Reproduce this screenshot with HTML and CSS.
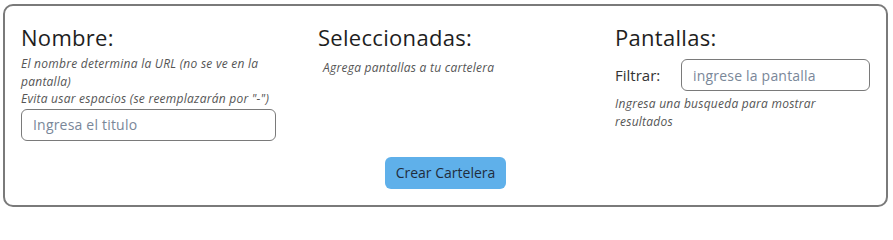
FILE: index.html
```html
<!DOCTYPE html>
<html lang="es">
<head>
<meta charset="utf-8">
<title>Crear Cartelera</title>
<link rel="stylesheet" href="styles.css">
</head>
<body>
<div class="panel">
  <div class="cols">
    <div class="col">
      <h2 class="title">Nombre:</h2>
      <p class="help help-wrap-1">El nombre determina la URL (no se ve en la pantalla)<br>Evita usar espacios (se reemplazarán por "-")</p>
      <input class="field field-name" type="text" placeholder="Ingresa el titulo">
    </div>
    <div class="col">
      <h2 class="title">Seleccionadas:</h2>
      <p class="help help-indent">Agrega pantallas a tu cartelera</p>
    </div>
    <div class="col">
      <h2 class="title">Pantallas:</h2>
      <div class="filter">
        <label class="filter-label">Filtrar:</label>
        <input class="field field-filter" type="text" placeholder="ingrese la pantalla">
      </div>
      <p class="help help-wrap">Ingresa una busqueda para mostrar resultados</p>
    </div>
  </div>
  <div class="actions">
    <button class="btn" type="button">Crear Cartelera</button>
  </div>
</div>
</body>
</html>
```
FILE: styles.css
```css
html, body {
  margin: 0;
  padding: 0;
  background: #ffffff;
}
body {
  font-family: "Open Sans", "Lato", sans-serif;
  color: #222;
}
.panel {
  margin: 4px 5px 5px 3px;
  border: 2px solid #7a7a7a;
  border-radius: 10px;
  height: 203px;
  box-sizing: border-box;
  padding: 18px 16px 0 16px;
}
.cols {
  display: grid;
  grid-template-columns: 297px 297px 1fr;
}
.title {
  margin: 0;
  padding-bottom: 4px;
  font-size: 22px;
  font-weight: 400;
  line-height: 26px;
  letter-spacing: 0.3px;
  color: #1e1e1e;
}
.help {
  margin: 0;
  font-size: 12px;
  font-style: italic;
  line-height: 17.5px;
  letter-spacing: 0.25px;
  color: #555;
}
.help-wrap-1 {
  width: 255px;
  padding-top: 1px;
}
.help-indent {
  padding-left: 5px;
  margin-top: 5px;
}
.help-wrap {
  width: 220px;
  margin-top: 4px;
}
.field {
  font-family: inherit;
  font-size: 14px;
  letter-spacing: 0.2px;
  height: 32px;
  box-sizing: border-box;
  border: 1px solid #7a7a7a;
  border-radius: 6px;
  padding: 0 11px;
  color: #333;
  outline: none;
}
.field::placeholder {
  color: #7a8799;
}
.field-name {
  width: 255px;
  margin-top: 1px;
}
.filter {
  display: flex;
  align-items: center;
  margin-top: 5px;
}
.filter-label {
  font-size: 15px;
  color: #333;
  width: 66px;
}
.field-filter {
  width: 189px;
}
.actions {
  display: flex;
  justify-content: center;
  margin-top: 16px;
}
.btn {
  font-family: inherit;
  font-size: 14px;
  background: #5fb0ea;
  color: #1f2d3d;
  border: none;
  border-radius: 6px;
  height: 32px;
  padding: 0 11px;
}
```
